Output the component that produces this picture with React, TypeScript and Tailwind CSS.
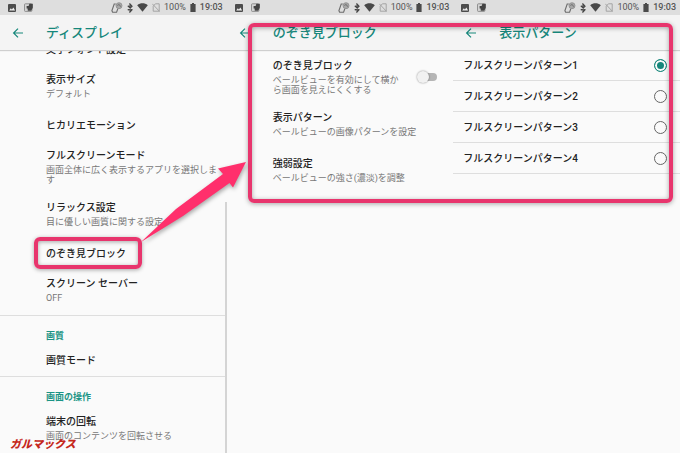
import type { ReactNode } from "react";

type Item = { title: string; sub?: string };

const displayItems: Item[] = [
  { title: "文字フォント設定" },
  { title: "表示サイズ", sub: "デフォルト" },
  { title: "ヒカリエモーション" },
  { title: "フルスクリーンモード", sub: "画面全体に広く表示するアプリを選択します" },
  { title: "リラックス設定", sub: "目に優しい画質に関する設定" },
  { title: "のぞき見ブロック" },
  { title: "スクリーン セーバー", sub: "OFF" },
];

const patterns = [
  "フルスクリーンパターン1",
  "フルスクリーンパターン2",
  "フルスクリーンパターン3",
  "フルスクリーンパターン4",
];

function StatusBar() {
  return (
    <div className="flex h-[15px] shrink-0 items-center justify-between bg-[#dedede] pr-1 pl-2 text-[#555]">
      <div className="flex items-center gap-2">
        <svg viewBox="0 0 8 8" className="size-2" aria-hidden="true">
          <rect width="8" height="8" rx="1" fill="#4c4c4c" />
          <path d="M1.2 6.4 2.8 4.2l1.1 1.3 1.5-2 1.7 2.9z" fill="#eee" />
        </svg>
        <svg viewBox="0 0 9 9" className="size-[9px]" aria-hidden="true">
          <rect x=".5" y=".8" width="7.4" height="7.6" rx=".8" fill="#d4d4d4" stroke="#888" strokeWidth=".9" />
          <path d="M2.6 3h2L5.4.8h3.4v4L7.2 7.8H3.8L3.6 5.6h-1z" fill="#444" />
        </svg>
      </div>
      <div className="flex items-center gap-1">
        <svg viewBox="0 0 12 11" className="h-[11px] w-3" fill="none" stroke="#6c6c6c" aria-hidden="true">
          <path d="M4.8 2H3.2L.9 8.8l.7 1.3 4 .1 1.2-3.4" strokeWidth="1.1" />
          <circle cx="8" cy="3.7" r="3" fill="#a8a8a8" stroke="#8a8a8a" strokeWidth=".8" />
          <path d="M6.4 3.4a1.7 1.7 0 0 1 3 1.2" stroke="#555" strokeWidth=".8" />
        </svg>
        <svg viewBox="0 0 6 10" className="h-2.5 w-1.5" fill="none" stroke="#444" strokeWidth="1.2" aria-hidden="true">
          <path d="m.8 2.8 4.2 4L3 9V1l2 2.2-4.2 4" />
        </svg>
        <svg viewBox="0 0 11 9" className="h-[9px] w-[11px]" aria-hidden="true">
          <path d="M.2 2.3C3.4-.3 7.6-.3 10.8 2.3L5.5 8.8z" fill="#484848" />
        </svg>
        <svg viewBox="0 0 8 9" className="h-[9px] w-2" fill="none" stroke="#a4a4a4" aria-hidden="true">
          <path d="M1.2 3.2 3.4.8h3.8v7.4H1.2zM.3.8l7.4 7.8" />
        </svg>
        <span className="text-[9px] leading-none">100%</span>
        <svg viewBox="0 0 6 9" className="h-[9px] w-1.5" fill="#4a4a4a" aria-hidden="true">
          <path d="M2 0h2v1h1.6v8H.4V1H2z" />
        </svg>
        <span className="text-[9px] leading-none font-medium">19:03</span>
      </div>
    </div>
  );
}

function Screen({ title, children }: { title: string; children: ReactNode }) {
  return (
    <section className="flex min-w-0 flex-col overflow-hidden bg-[#fafafa]">
      <StatusBar />
      <header className="z-10 flex h-[35px] shrink-0 items-center bg-[#f4f4f4] pl-3 shadow-[0_1px_1px_#cfcfcf]">
        <button type="button" aria-label="戻る" className="w-[34px]">
          <svg viewBox="0 0 12 12" className="size-3" fill="none" stroke="#16877b" strokeWidth="1.2" aria-hidden="true">
            <path d="M11 6H1.6M6 1.6 1.6 6 6 10.4" />
          </svg>
        </button>
        <h1 className="text-[13px] leading-4 font-medium text-[#16877b]">{title}</h1>
      </header>
      <div className="relative min-h-0 flex-1 overflow-hidden">{children}</div>
    </section>
  );
}

function ItemText({ title, sub }: Item) {
  return (
    <>
      <span className="block text-[10px] leading-[14px] font-medium text-[#222]">{title}</span>
      {sub && <span className="mt-0.5 block text-[9px] leading-[10px] text-[#777]">{sub}</span>}
    </>
  );
}

function Row({ title, sub }: Item) {
  return (
    <li className={sub ? "min-h-[46px]" : "min-h-[30px]"}>
      <a href="#" className="block py-2 pr-2 pl-[46px]">
        <ItemText title={title} sub={sub} />
      </a>
    </li>
  );
}

function Group({ label, children }: { label: string; children: ReactNode }) {
  return (
    <div>
      <h2 className="h-[31px] border-t border-[#dedede] pt-[15px] pl-[46px] text-[9px] leading-[10px] font-bold text-[#1a9485]">
        {label}
      </h2>
      <ul>{children}</ul>
    </div>
  );
}

function Annotations() {
  return (
    <div className="pointer-events-none absolute inset-0 z-20" aria-hidden="true">
      <div className="absolute top-[237px] left-[34px] h-8 w-[108px] rounded-md border-4 border-[#e8356d] shadow-[0_1px_4px_#0005,inset_0_1px_4px_#0005]" />
      <div className="absolute top-[23px] right-[7px] left-[248px] h-[180px] rounded-md border-4 border-[#e8356d] shadow-[0_1px_5px_#0005,inset_0_1px_5px_#0005]" />
      <svg viewBox="130 150 120 100" className="absolute top-[150px] left-[130px] h-[100px] w-[120px] drop-shadow-[1px_2px_2px_#0005]">
        <path d="M141 242 176 209 223 174 218 168.5 246 162 233 187.5 229.5 183 183 216Z" fill="#ff2f6c" />
      </svg>
      <span className="absolute bottom-0 left-[10px] text-[11px] leading-4 font-black text-[#c5281c] italic">
        ガルマックス
      </span>
    </div>
  );
}

export default function App() {
  return (
    <main className="relative grid h-screen grid-cols-3 overflow-hidden bg-[#fafafa] font-[Roboto,'Noto_Sans_CJK_JP',sans-serif]">
      <Screen title="ディスプレイ">
        <ul className="-mt-[15px]">
          {displayItems.map((item) => (
            <Row key={item.title} {...item} />
          ))}
        </ul>
        <Group label="画質">
          <Row title="画質モード" />
        </Group>
        <Group label="画面の操作">
          <Row title="端末の回転" sub="画面のコンテンツを回転させる" />
        </Group>
        <div className="absolute top-[152px] right-0 bottom-0 w-0.5 bg-[#d4d4d4]" />
      </Screen>

      <Screen title="のぞき見ブロック">
        <ul className="pt-px">
          <li>
            <label className="flex items-center justify-between py-2 pr-4 pl-[46px]">
              <span className="w-[130px]">
                <ItemText title="のぞき見ブロック" sub="ベールビューを有効にして横から画面を見えにくくする" />
              </span>
              <span className="relative flex h-3 w-5 items-center">
                <input
                  type="checkbox"
                  role="switch"
                  className="peer ml-auto h-2 w-4 appearance-none rounded-full bg-[#b5b5b5]"
                />
                <span className="absolute left-0 size-3 rounded-full bg-[#f1f1f1] shadow-[0_0_2px_#0007] peer-checked:left-2" />
              </span>
            </label>
          </li>
          <Row title="表示パターン" sub="ベールビューの画像パターンを設定" />
          <Row title="強弱設定" sub="ベールビューの強さ(濃淡)を調整" />
        </ul>
      </Screen>

      <Screen title="表示パターン">
        {patterns.map((name, i) => (
          <label
            key={name}
            className="flex h-[31px] items-center justify-between border-b border-[#dedede] pr-[13px] pl-[10px] text-[10px] font-medium text-[#222]"
          >
            {name}
            <input
              type="radio"
              name="pattern"
              defaultChecked={i === 0}
              className="size-[13px] appearance-none rounded-full border border-[#666] checked:border-[#16877b] checked:bg-[#16877b] checked:shadow-[inset_0_0_0_2px_#fafafa]"
            />
          </label>
        ))}
      </Screen>
      <Annotations />
    </main>
  );
}
